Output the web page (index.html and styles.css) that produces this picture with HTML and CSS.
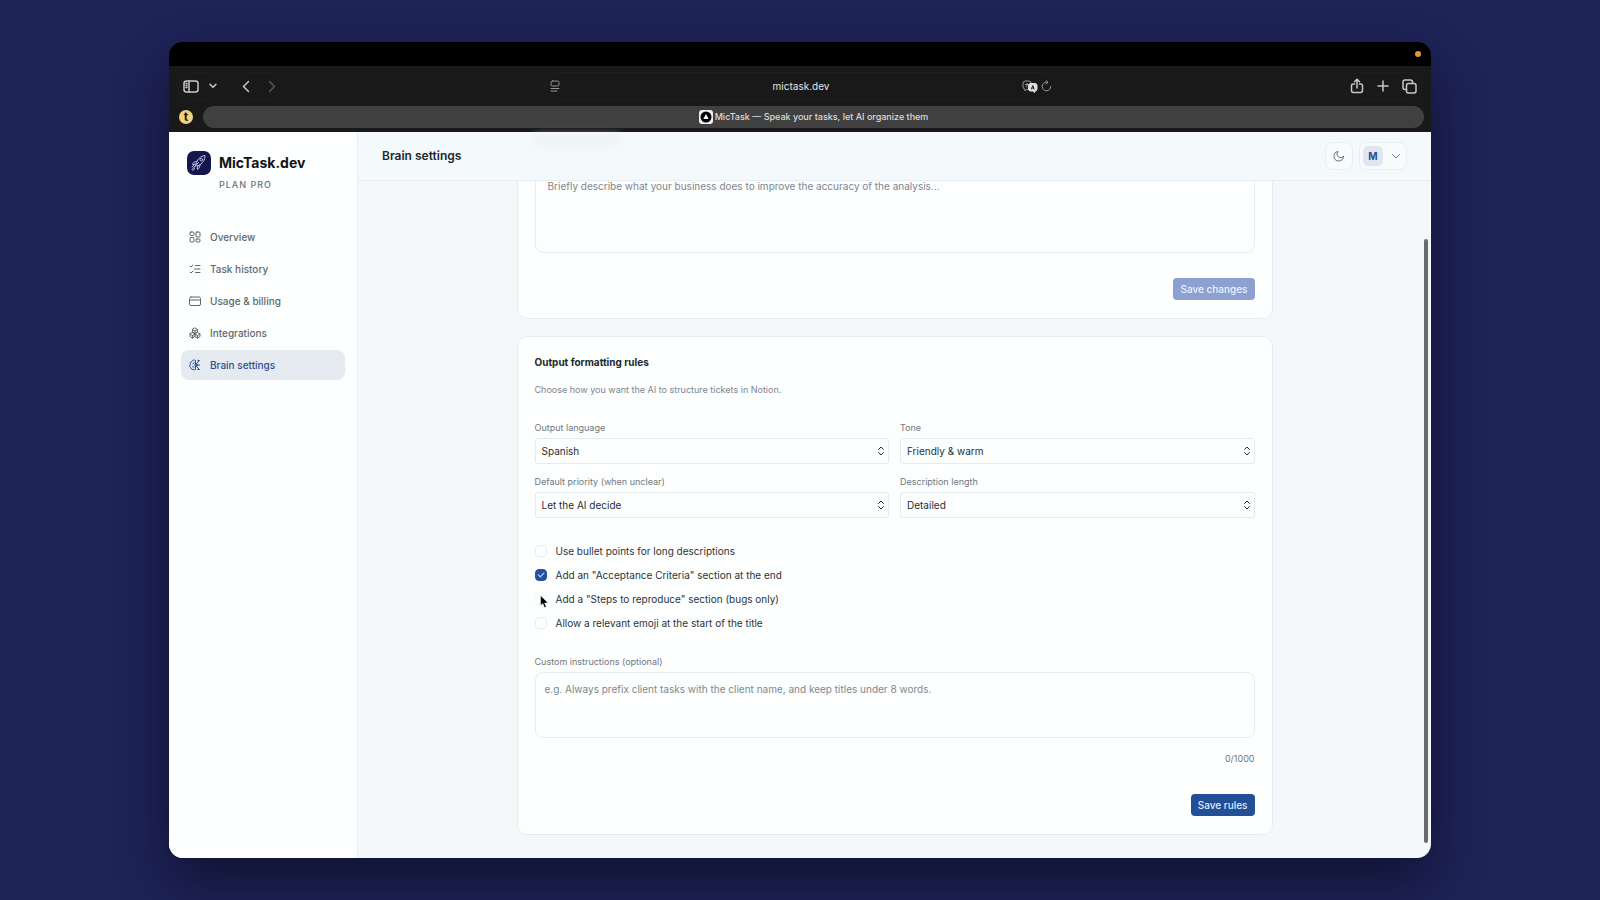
FILE: index.html
```html
<!DOCTYPE html>
<html lang="en">
<head>
  <meta charset="UTF-8" />
  <meta name="viewport" content="width=device-width, initial-scale=1.0"/>
  <title>MicTask — Speak your tasks, let AI organize them</title>
  <link rel="stylesheet" href="styles.css">
</head>
<body>
  <div class="window">
    <div class="menu-strip"><span class="rec-dot"></span></div>

    <!-- Browser toolbar -->
    <div class="toolbar">
      <div class="tool-side">
        <div class="tool-group">
          <button aria-label="Sidebar"><svg width="16" height="13" viewBox="0 0 16 13"><rect x="1" y="1" width="14" height="11" rx="2.5"/><path d="M6 1v11M3 3.5h1M3 5.5h1M3 7.5h1"/></svg></button>
          <button aria-label="Tab groups"><svg width="8" height="6" viewBox="0 0 8 6"><path d="M1 1.2l3 3 3-3"/></svg></button>
        </div>
        <div class="tool-group">
          <button aria-label="Back"><svg width="8" height="13" viewBox="0 0 8 13"><path d="M6.5 1.5l-5 5 5 5"/></svg></button>
          <button class="dim" aria-label="Forward"><svg width="8" height="13" viewBox="0 0 8 13"><path d="M1.5 1.5l5 5-5 5"/></svg></button>
        </div>
      </div>
      <div class="address-bar">
        <svg width="10" height="12" viewBox="0 0 10 12"><rect x="1" y="1" width="8" height="5" rx="1.5"/><path d="M1 8.5h8M1 11h6"/></svg>
        <span>mictask.dev</span>
        <div class="address-icons">
          <svg width="16" height="13" viewBox="0 0 16 13"><path d="M6 9.5H4.500L3 11V9.200A2.500 2.500 0 0 1 1 7V3.500A2.500 2.500 0 0 1 3.500 1H7a2.500 2.500 0 0 1 2.300 2M3.500 4.500h3M5 3.500v1M4 7l2-2.500"/><path d="M8.500 3.500h4.500a2 2 0 0 1 2 2v3.500a2 2 0 0 1-2 2l-.5 1.500-1.800-1.500H8.500a2 2 0 0 1-2-2V5.500a2 2 0 0 1 2-2z" fill="#dedede" stroke="#dedede"/><path d="M9.500 9l1.300-3.500L12 9M10 8h1.700" stroke="#222"/></svg>
          <svg width="11" height="12" viewBox="0 0 11 12"><path d="M9.800 6.500A4.300 4.300 0 1 1 5.500 2.200h1M5 .5l2 1.800-2 1.900"/></svg>
        </div>
      </div>
      <div class="tool-side right">
        <div class="tool-group">
          <button aria-label="Share"><svg width="14" height="16" viewBox="0 0 14 16"><path d="M4.500 6H3a1.500 1.500 0 0 0-1.500 1.500v5A2 2 0 0 0 3.500 14.500h7a2 2 0 0 0 2-2v-5A1.500 1.500 0 0 0 11 6H9.500M7 10V1.500M4.500 3.800L7 1.300l2.500 2.500"/></svg></button>
          <button aria-label="New tab"><svg width="12" height="12" viewBox="0 0 12 12"><path d="M6 1v10M1 6h10"/></svg></button>
          <button aria-label="Tab overview"><svg width="15" height="15" viewBox="0 0 15 15"><rect x="4.500" y="4.500" width="9.500" height="9.500" rx="2"/><path d="M4.500 10.500H3a2 2 0 0 1-2-2V3a2 2 0 0 1 2-2h5.500a2 2 0 0 1 2 2v1.500"/></svg></button>
        </div>
      </div>
    </div>

    <!-- Tabs -->
    <div class="tab-bar">
      <span class="pinned-tab">t</span>
      <div class="active-tab">
        <svg width="14" height="14" viewBox="0 0 14 14"><rect width="14" height="14" rx="3" fill="#eee"/><circle cx="7" cy="7" r="5.500" fill="#000"/><path d="M7 4l2.700 5H4.300z" fill="#fff"/></svg>
        <span>MicTask — Speak your tasks, let AI organize them</span>
      </div>
    </div>

    <div class="app">
      <aside class="sidebar">
        <div class="brand">
          <svg width="24" height="24" viewBox="0 0 24 24"><rect width="24" height="24" rx="7" fill="#14164d" stroke="none"/><g fill="none" stroke="#bfc5ea" stroke-linecap="round" stroke-linejoin="round"><path d="M9 13c1-4.500 4.500-7.800 9-8.500.2 4.500-2.500 8-7 10.500z"/><path d="M9.500 10.500c-2 0-3.500 1-4 3l3-.3M13 13.500c.2 2-.8 3.700-2.500 5l-.3-3.500"/><circle cx="14.300" cy="8.600" r="1.300"/><path d="M8.500 14.500l-3.500 4M7.500 17.500l-1.500 2M6.500 14.500l-1.500 1.500M11.500 11.500l-4 4.500"/></g></svg>
          <div>
            <div class="brand-name">MicTask.dev</div>
            <div class="brand-plan">PLAN PRO</div>
          </div>
        </div>

        <nav>
          <a href="#"><svg viewBox="0 0 24 24"><rect x="2" y="2" width="8" height="7" rx="2"/><rect x="14" y="2" width="8" height="10" rx="2"/><rect x="2" y="13" width="8" height="9" rx="2"/><rect x="14" y="16" width="8" height="6" rx="2"/></svg>Overview</a>
          <a href="#"><svg viewBox="0 0 24 24"><path d="M2 6l2 2 4-4M2 18l2 2 4-4M13 5h9M11 12h11M13 19h9"/></svg>Task history</a>
          <a href="#"><svg viewBox="0 0 24 24"><rect x="1" y="4" width="22" height="17" rx="3"/><path d="M1 10h22"/></svg>Usage &amp; billing</a>
          <a href="#"><svg viewBox="0 0 24 24"><path d="M12 2l5 3v5l-5 3-5-3V5zM7 11l5 3v5l-5 3-5-3v-5zM17 11l5 3v5l-5 3-5-3v-5zM12 8v5M7 5l5 3 5-3M2 14l5 3 5-3 5 3 5-3M7 17v5M17 17v5"/></svg>Integrations</a>
          <a href="#" class="active"><svg viewBox="0 0 24 24"><path d="M13 3.500a4 4 0 0 0-7 1.500 4.500 4.500 0 0 0-3.500 6 4.500 4.500 0 0 0 1 6.500A4.500 4.500 0 0 0 8 21a4 4 0 0 0 5-.5M13 3.500v5.500M13 15v5.500M8 9.500c1.500 0 2.500-1 2.500-2.500M7 15.500c1.500-.5 2.500 0 3 1"/><path d="M13 12h8M15 9.500l5-6M15 14.500l5 6M17.500 2.500l3 1M17.500 21h3"/><circle cx="14" cy="12" r="2.500"/></svg>Brain settings</a>
        </nav>
      </aside>

      <main>
        <header>
          <h1>Brain settings</h1>
          <div class="header-actions">
            <button class="theme-btn" aria-label="Dark mode"><svg width="12" height="12" viewBox="0 0 24 24"><path d="M21 13A9.500 9.500 0 1 1 10 3a7 7 0 0 0 11 10z"/></svg></button>
            <button class="user-btn" aria-label="Account"><span>M</span><svg width="10" height="10" viewBox="0 0 10 10"><path d="M1.500 3.500L5 7l3.500-3.500"/></svg></button>
          </div>
        </header>

        <div class="content">
          <section class="card">
            <textarea class="business" aria-label="Business" placeholder="Briefly describe what your business does to improve the accuracy of the analysis..."></textarea>
            <div class="card-footer">
              <button class="btn" disabled>Save changes</button>
            </div>
          </section>

          <section class="card">
            <h2>Output formatting rules</h2>
            <p class="hint">Choose how you want the AI to structure tickets in Notion.</p>

            <div class="fields">
              <div class="field">
                <label for="language">Output language</label>
                <div class="select-box">
                  <select id="language"><option>Spanish</option></select>
                  <svg width="8" height="10" viewBox="0 0 8 10"><path d="M1.500 3.500L4 1l2.500 2.500M1.500 6.500L4 9l2.500-2.500"/></svg>
                </div>
              </div>
              <div class="field">
                <label for="tone">Tone</label>
                <div class="select-box">
                  <select id="tone"><option>Friendly &amp; warm</option></select>
                  <svg width="8" height="10" viewBox="0 0 8 10"><path d="M1.500 3.500L4 1l2.500 2.500M1.500 6.500L4 9l2.500-2.500"/></svg>
                </div>
              </div>
              <div class="field">
                <label for="priority">Default priority (when unclear)</label>
                <div class="select-box">
                  <select id="priority"><option>Let the AI decide</option></select>
                  <svg width="8" height="10" viewBox="0 0 8 10"><path d="M1.500 3.500L4 1l2.500 2.500M1.500 6.500L4 9l2.500-2.500"/></svg>
                </div>
              </div>
              <div class="field">
                <label for="length">Description length</label>
                <div class="select-box">
                  <select id="length"><option>Detailed</option></select>
                  <svg width="8" height="10" viewBox="0 0 8 10"><path d="M1.500 3.500L4 1l2.500 2.500M1.500 6.500L4 9l2.500-2.500"/></svg>
                </div>
              </div>
            </div>

            <div class="checks">
              <label><input type="checkbox"><span>Use bullet points for long descriptions</span></label>
              <label><input type="checkbox" checked><span>Add an "Acceptance Criteria" section at the end</span></label>
              <label class="hovered"><input type="checkbox"><span>Add a "Steps to reproduce" section (bugs only)</span>
                <svg class="cursor" width="9" height="13" viewBox="0 0 9 13"><path d="M.5.5v10l2.300-2 1.700 4 1.800-.8-1.700-3.700h3.400z"/></svg>
              </label>
              <label><input type="checkbox"><span>Allow a relevant emoji at the start of the title</span></label>
            </div>

            <div class="field">
              <label for="custom">Custom instructions (optional)</label>
              <textarea id="custom" placeholder="e.g. Always prefix client tasks with the client name, and keep titles under 8 words."></textarea>
            </div>
            <div class="counter">0/1000</div>
            <div class="card-footer">
              <button class="btn">Save rules</button>
            </div>
          </section>
        </div>
        <div class="scrollbar"></div>
      </main>
    </div>
  </div>
</body>
</html>
```
FILE: styles.css
```css
* { margin: 0; padding: 0; box-sizing: border-box; }

body {
  font-family: Inter, 'Liberation Sans', sans-serif;
  font-size: 10px;
  line-height: 14px;
  color: #1d2429;
  background: #1f2459;
  height: 100vh;
  padding: 42px 169px;
  overflow: hidden;
}

button { font: inherit; color: inherit; background: none; border: none; }
svg { display: block; flex: none; fill: none; stroke: currentColor; stroke-linecap: round; stroke-linejoin: round; }

.window {
  height: 100%;
  display: flex;
  flex-direction: column;
  border-radius: 14px;
  overflow: hidden;
  background: #191919;
  box-shadow: 0 24px 60px rgba(8, 10, 30, 0.7);
}

.menu-strip {
  height: 24px;
  background: #000;
  display: flex;
  align-items: center;
  justify-content: flex-end;
  padding-right: 10px;
}
.rec-dot { width: 6px; height: 6px; border-radius: 50%; background: #e8963a; }

/* Browser toolbar */
.toolbar {
  height: 40px;
  display: flex;
  align-items: center;
  padding: 0 8px;
  color: #c8c8c8;
}
.tool-side { flex: 1; display: flex; gap: 10px; }
.tool-side.right { justify-content: flex-end; }
.tool-group {
  height: 28px;
  display: flex;
  align-items: center;
  gap: 10px;
  padding: 0 5px;
  border: 1px solid #1e1e1e;
  border-radius: 14px;
}
.tool-group + .tool-group { gap: 18px; padding: 0 8px; }
.tool-group svg { stroke-width: 1.500; }
.right .tool-group { gap: 13px; padding: 0 5px; }
.dim { color: #555; }
.address-bar {
  width: 512px;
  height: 28px;
  display: flex;
  align-items: center;
  justify-content: space-between;
  padding: 0 3px 0 5px;
  border: 1px solid #202020;
  border-radius: 14px;
}
.address-bar > span { color: #e4e4e4; padding-left: 20px; }
.address-bar svg { color: #9a9a9a; }
.address-icons { display: flex; align-items: center; gap: 3px; }

.tab-bar {
  height: 26px;
  display: flex;
  gap: 8px;
  padding: 0 7px 4px 10px;
}
.pinned-tab {
  width: 14px;
  height: 14px;
  margin: 4px 0;
  border-radius: 50%;
  background: #f3cf83;
  color: #1b1509;
  font-weight: 700;
  font-size: 12px;
  line-height: 13px;
  text-align: center;
}
.active-tab {
  flex: 1;
  height: 22px;
  display: flex;
  align-items: center;
  justify-content: center;
  gap: 2px;
  margin-left: 2px;
  border-radius: 11px;
  background: #404040;
  color: #dcdcdc;
  font-size: 9px;
  font-weight: 500;
}
.active-tab svg { stroke: none; }

/* App */
.app { flex: 1; min-height: 0; display: flex; background: #f4f8fb; }
.sidebar {
  width: 189px;
  padding: 19px 12px;
  background: #fdfefe;
  border-right: 1px solid #e8eef1;
}
.brand { display: flex; gap: 8px; padding: 0 6px; }
.brand-name { font-size: 14px; line-height: 24px; font-weight: 700; color: #0f1418; }
.brand-plan { margin-top: 3px; font-size: 9px; font-weight: 500; letter-spacing: 1px; color: #66757b; }

nav { display: flex; flex-direction: column; gap: 2px; margin-top: 30px; }
nav a {
  height: 30px;
  display: flex;
  align-items: center;
  gap: 9px;
  padding: 0 8px;
  border-radius: 8px;
  color: #5c696f;
  font-weight: 500;
  text-decoration: none;
}
nav svg { width: 12px; height: 12px; stroke-width: 2; }
nav a.active { background: #e4eaf0; color: #2c4f92; }

main { flex: 1; position: relative; display: flex; flex-direction: column; }
header {
  height: 49px;
  flex: none;
  position: relative;
  display: flex;
  align-items: center;
  justify-content: space-between;
  padding: 0 24px;
  background: #f4f9fb;
  border-bottom: 1px solid #e6edf1;
}
header::before {
  content: "";
  position: absolute;
  top: 4px;
  left: calc(50% - 360px);
  width: 84px;
  height: 8px;
  background: #ebf1f2;
  filter: blur(4px);
}
h1 { font-size: 12px; font-weight: 600; color: #20282d; }
.header-actions { display: flex; gap: 6px; color: #66737a; }
.theme-btn, .user-btn {
  height: 28px;
  display: flex;
  align-items: center;
  border: 1px solid #e9eef2;
  border-radius: 7px;
  background: #f8fbfc;
}
.theme-btn { width: 28px; justify-content: center; }
.theme-btn svg { stroke-width: 2; }
.user-btn { gap: 8px; padding: 0 5px 0 3px; }
.user-btn span {
  width: 20px;
  line-height: 20px;
  border-radius: 5px;
  background: #dfe6f1;
  color: #2f4b8f;
  font-weight: 700;
}

.content {
  flex: 1;
  min-height: 0;
  overflow: hidden;
  display: flex;
  flex-direction: column;
  justify-content: flex-end;
  align-items: center;
  gap: 17px;
  padding: 0 24px 23px;
}
.card {
  width: 100%;
  max-width: 756px;
  flex: none;
  padding: 17px 17px 18px;
  background: #fdfefe;
  border: 1px solid #e6edf0;
  border-radius: 10px;
}
h2 { font-size: 10px; line-height: 16px; font-weight: 700; color: #20282d; }
.hint { margin-top: 13px; font-size: 9px; color: #7b878d; }

.fields {
  display: grid;
  grid-template-columns: 1fr 1fr;
  gap: 11px;
  margin-top: 24px;
}
.field { display: flex; flex-direction: column; gap: 3px; }
.field > label { font-size: 9px; color: #6d797f; }
.select-box { position: relative; }
.select-box svg { position: absolute; right: 4px; top: 8px; color: #2a3237; pointer-events: none; }
select {
  appearance: none;
  width: 100%;
  height: 26px;
  padding: 0 6px;
  font: inherit;
  color: #262e33;
  background: #fdffff;
  border: 1px solid #e4ebee;
  border-radius: 3px;
}

.checks { display: flex; flex-direction: column; gap: 10px; margin: 26px 0 25px; }
.checks label { position: relative; display: flex; align-items: center; gap: 9px; color: #2c3439; }
.checks input {
  appearance: none;
  width: 12px;
  height: 12px;
  border: 1px solid #e9eef0;
  border-radius: 4px;
  background: #fdfefe;
}
.checks input:checked { background: #2850a0; border-color: #2850a0; }
.checks input:checked::before {
  content: "";
  display: block;
  width: 5px;
  height: 3px;
  margin: 2px;
  border: solid #c9dcff;
  border-width: 0 0 1px 1px;
  transform: rotate(-45deg);
}
.hovered input { border-color: #f5f8f9; }
.cursor { position: absolute; left: 5px; top: 3px; }
.cursor path { fill: #000; stroke: #fff; stroke-width: 0.500; }

textarea {
  display: block;
  width: 100%;
  height: 66px;
  padding: 9px;
  font: inherit;
  color: inherit;
  background: #fdfefe;
  border: 1px solid #e6edf0;
  border-radius: 8px;
  resize: none;
}
textarea.business { height: 83px; padding: 8px 12px; }
textarea::placeholder { color: #7c888e; }

.counter { margin-top: 14px; text-align: right; font-size: 9px; color: #6d797f; }
.card-footer { display: flex; justify-content: flex-end; margin-top: 28px; }
.business + .card-footer { margin-top: 25px; }
.btn {
  height: 22px;
  padding: 0 7px;
  border-radius: 4px;
  background: #244f97;
  color: #dfeaff;
  font-weight: 500;
}
.btn:disabled { background: #8da1d0; color: #eaf1ff; }

.scrollbar {
  position: absolute;
  right: 3px;
  top: 107px;
  bottom: 15px;
  width: 4px;
  border-radius: 2px;
  background: #666d6f;
}
```
